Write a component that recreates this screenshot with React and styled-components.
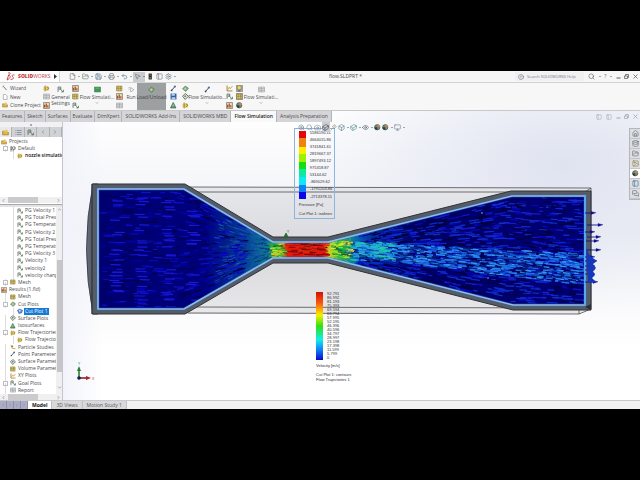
import React from 'react';
import styled, { createGlobalStyle, css } from 'styled-components';
import {
  Box,
  Camera,
  ChevronDown,
  ChevronLeft,
  ChevronRight,
  ChevronUp,
  CircleHelp,
  Cuboid,
  Database,
  Eye,
  File,
  FolderOpen,
  House,
  Image as ImageIcon,
  List as ListIcon,
  MessagesSquare,
  Monitor,
  MousePointer2,
  PanelLeft,
  Printer,
  Save,
  Search,
  Settings,
  Undo2,
  Wand,
  ZoomIn,
} from 'lucide-react';

const GlobalStyle = createGlobalStyle`
  * {
    box-sizing: border-box;
  }

  body {
    margin: 0;
    background: #000;
    color: #4a4a4c;
    font-family: 'Open Sans', 'Noto Sans', sans-serif;
    font-size: 5px;
    line-height: 7px;
  }

  button,
  input {
    margin: 0;
    padding: 0;
    border: 0;
    background: none;
    color: inherit;
    font: inherit;
  }

  svg {
    display: block;
    flex: none;
  }
`;

const Screen = styled.div`
  min-height: 100vh;
  padding: 71px 0;
  display: flex;
  flex-direction: column;
`;

const TitleBar = styled.header`
  height: 12px;
  display: flex;
  align-items: stretch;
  background: #f6f6f6;
  border-bottom: 1px solid #d2d2d2;
`;

const Brand = styled.div`
  width: 60px;
  padding: 0 3px 0 6px;
  display: flex;
  align-items: center;
  gap: 3px;
  background: #fff;
  border-right: 1px solid #d8d8d8;
  color: #c33a3e;
`;

const BrandName = styled.span`
  flex: 1;
  font-family: 'Open Sans', sans-serif;
  font-size: 5px;
  font-weight: 400;

  b {
    font-weight: 800;
  }
`;

const QuickTools = styled.div`
  display: flex;
  align-items: center;
  gap: 1px;
  padding-left: 8px;
`;

const QuickButton = styled.button`
  height: 10px;
  min-width: ${({ $caret }) => ($caret ? '12px' : '8px')};
  display: flex;
  align-items: center;
  justify-content: center;
  gap: 2px;
  color: ${({ $color }) => $color || '#66707c'};
  background: ${({ $active }) => ($active ? '#c9cbce' : 'transparent')};
`;

const Caret = styled.i`
  border: 1px solid transparent;
  border-top-color: #555;
  border-bottom: 0;
`;

const DocumentTitle = styled.h1`
  flex: 1;
  margin: 0;
  align-self: center;
  text-align: center;
  font-size: 5px;
  font-weight: 400;
`;

const SearchBox = styled.label`
  width: 69px;
  margin: 1px 0;
  padding-left: 3px;
  display: flex;
  align-items: center;
  gap: 3px;
  background: #f0f0f2;
  color: #60656c;

  input {
    width: 56px;
    outline: 0;
    font-size: 4px;
  }

  input::placeholder {
    color: #74767c;
    opacity: 1;
  }
`;

const WindowTools = styled.div`
  display: flex;
  align-items: center;
  justify-content: space-between;
  width: 56px;
  padding: 0 2px 0 4px;
`;

const GlyphButton = styled.button`
  display: flex;
  align-items: center;
  justify-content: center;
  color: ${({ $muted }) => ($muted ? '#a2a6b2' : '#5c5c5e')};
`;

const Ribbon = styled.div`
  height: 28px;
  padding-left: 2px;
  display: flex;
  background: #f7f7f7;
  border-bottom: 1px solid #c8c8ca;
`;

const RibbonColumn = styled.div`
  width: ${({ $width }) => $width || 10}px;
  display: flex;
  flex-direction: column;
  justify-content: space-evenly;
  align-items: ${({ $start }) => ($start ? 'flex-start' : 'center')};
`;

const RibbonItem = styled.button`
  display: flex;
  align-items: center;
  gap: 2px;
  line-height: 8px;
  white-space: nowrap;
  background: ${({ $active }) => ($active ? '#9ea1a2' : 'transparent')};
`;

const RibbonButton = styled.button`
  width: ${({ $width }) => $width}px;
  padding-top: 3px;
  display: flex;
  flex-direction: column;
  align-items: center;
  gap: 1px;
  line-height: 6px;
  white-space: nowrap;
  ${({ $active }) =>
    $active &&
    css`
      background: #9da0a1;
      color: #3f4244;
    `}
`;

const Workspace = styled.main`
  flex: 1;
  display: flex;
  flex-direction: column;
  background:
    radial-gradient(ellipse 42% 50% at 88% 18%, #dfe3f0 0%, transparent 100%),
    linear-gradient(90deg, #f3f4fb 10%, transparent 16%),
    linear-gradient(#fff 0%, #f0f1f6 40%, #fff 80%);
`;

const TabRow = styled.div`
  height: 11px;
  display: flex;
  justify-content: space-between;
`;

const Tabs = styled.nav`
  display: flex;
`;

const Tab = styled.button`
  padding: 0 ${({ $pad }) => $pad}px;
  border-right: 1px solid #b5b5b7;
  background: #d5d5d7;
  white-space: nowrap;
  ${({ $active }) =>
    $active &&
    css`
      background: #f9f9f9;
      color: #202020;
      font-weight: 600;
    `}
`;

const ViewControls = styled.div`
  width: 44px;
  padding-right: 2px;
  display: flex;
  align-items: center;
  justify-content: space-between;
`;

const Body = styled.div`
  flex: 1;
  display: flex;
  min-height: 0;
`;

const Sidebar = styled.aside`
  width: 63px;
  display: flex;
  flex-direction: column;
  background: #fff;
  border-right: 1px solid #c4c5ca;
`;

const Grip = styled.div`
  height: 5px;
  display: flex;
  align-items: center;
  justify-content: center;
  background: #f1f1f3;

  &::before {
    content: '';
    width: 2px;
    height: 2px;
    background: #aaa;
  }
`;

const PaneTabs = styled.div`
  height: 10px;
  display: flex;
  background: #d1d2d6;
`;

const PaneTab = styled.button`
  width: 13px;
  display: flex;
  align-items: center;
  justify-content: center;
  border-right: 1px solid #aeb0b4;
  color: #5a6f86;
  background: ${({ $active }) => ($active ? '#e9e9e9' : 'transparent')};
`;

const TreeList = styled.ul`
  margin: 0;
  padding: ${({ $top }) => ($top ? '1px 0 0' : '0')};
  height: ${({ $top }) => ($top ? '60px' : 'auto')};
  flex: ${({ $top }) => ($top ? 'none' : '1')};
  min-width: 0;
  list-style: none;
  display: flex;
  flex-direction: column;
  overflow: hidden;
`;

const TreeRow = styled.li`
  flex: ${({ $fixed }) => ($fixed ? '0 0 7px' : '1 1 0')};
  min-height: 0;
  padding-left: ${({ $level }) => [1, 10, 17][$level]}px;
  position: relative;
  display: flex;
  align-items: center;
  gap: 1px;
  line-height: 7px;
  white-space: nowrap;
  font-weight: ${({ $bold }) => ($bold ? 600 : 400)};
  color: ${({ $bold }) => ($bold ? '#111' : 'inherit')};

  &::before {
    content: '';
    position: absolute;
    left: ${({ $level }) => ($level === 2 ? 13 : 5)}px;
    top: 0;
    bottom: 0;
    border-left: ${({ $level }) => ($level ? '1px solid #dedee2' : '0')};
  }
`;

const TreeLabel = styled.span`
  padding: 0 1px;
  ${({ $selected }) =>
    $selected &&
    css`
      background: #1679d3;
      color: #fff;
    `}
`;

const Expander = styled.button`
  position: absolute;
  left: 3px;
  width: 5px;
  height: 5px;
  border: 1px solid #bbbdc3;
  background: #fff;
  font-size: 4px;
  line-height: 3px;
`;

const TreeArea = styled.div`
  flex: 1;
  min-height: 0;
  display: flex;
`;

const HScroll = styled.div`
  height: 6px;
  display: flex;
  align-items: center;
  justify-content: space-between;
  padding: 0 1px;
  background: #f0f0f0;

  &::before {
    content: '';
    order: 1;
    width: 30px;
    height: 6px;
    margin-right: 17px;
    background: #cbcbcd;
  }

  svg:last-child {
    order: 2;
  }
`;

const VScroll = styled.div`
  width: 6px;
  display: flex;
  flex-direction: column;
  align-items: center;
  background: #f0f0f0;

  &::before {
    content: '';
    order: 1;
    flex: 0 0 60%;
    width: 5px;
    margin: auto 0 13px;
    background: #c6c6c8;
  }

  svg:last-child {
    order: 2;
    margin-bottom: 4px;
  }
`;

const Splitter = styled.div`
  height: 3px;
  margin: 1px 0 0;
  border-top: 1px solid #a7a7a9;
  background: #e3e3e5;
`;

const Viewport = styled.section`
  flex: 1;
  min-width: 0;
  position: relative;
`;

const Scene = styled.svg`
  width: 100%;
  height: 100%;
  position: absolute;
  inset: 0;
`;

const HeadsUp = styled.div`
  position: absolute;
  top: 0;
  left: 0;
  right: 0;
  display: flex;
  justify-content: center;
`;

const Legend = styled.figure`
  position: absolute;
  left: ${({ $left }) => $left}%;
  top: ${({ $top }) => $top}%;
  margin: 0;
  padding: 2px 0 0 4px;
  border: 1px solid ${({ $framed }) => ($framed ? '#8db4dc' : 'transparent')};
  font-family: 'Liberation Sans', Arial, sans-serif;
  font-size: 4px;
  line-height: 5px;
  color: #303034;
  white-space: nowrap;
`;

const Scale = styled.div`
  height: 68px;
  display: flex;
  gap: 4px;
`;

const ScaleBar = styled.div`
  width: 7px;
  background: ${({ $colors }) => $colors};
`;

const ScaleValues = styled.ol`
  margin: 0;
  padding: 0;
  list-style: none;
  display: flex;
  flex-direction: column;
  justify-content: space-between;

  li {
    height: 4px;
    line-height: 4px;
  }
`;

const Caption = styled.figcaption`
  padding: 3px 2px 2px 0;

  p {
    margin: 0;
  }

  p + p {
    margin-top: 4px;
  }

  p + p + p {
    margin-top: 0;
  }
`;

const TaskPane = styled.div`
  position: absolute;
  right: 0;
  top: 6px;
  width: 11px;
  display: flex;
  flex-direction: column;
  border: 1px solid #b4b6bc;
  border-right: 0;
`;

const TaskButton = styled.button`
  height: 10px;
  display: flex;
  align-items: center;
  justify-content: center;
  border-bottom: 1px solid #c3c5ca;
  background: ${({ $active }) => ($active ? '#fff' : '#dcdee2')};
  color: ${({ $color }) => $color || '#5d6874'};
`;

const BottomTabs = styled.nav`
  height: 9px;
  display: flex;
  background: #f2f2f3;
  border-top: 1px solid #c9c9cc;
`;

const PageNav = styled.div`
  width: 28px;
  display: flex;

  button {
    flex: 1;
    display: flex;
    align-items: center;
    justify-content: center;
    border-right: 1px solid #8f91a8;
    background: #abadc4;
    color: #73758f;
  }
`;

const SheetTab = styled.button`
  padding: 0 4px;
  background: ${({ $active }) => ($active ? '#fff' : '#d9d9db')};
  border-right: 1px solid #c0c0c2;
  font-weight: ${({ $active }) => ($active ? 700 : 400)};
  color: ${({ $active }) => ($active ? '#111' : '#555')};
`;

const glyphs = {
  goal: (
    <>
      <path d="M2 11V2h5v4H3" fill="none" stroke="#56605a" strokeWidth="1.5" />
      <path d="M5 4l6 7M8 11h4V7" fill="none" stroke="#4c7a58" strokeWidth="1.5" />
    </>
  ),
  project: (
    <>
      <path d="M1 4h5l1 2h5v5H1z" fill="#d9b24c" stroke="#94762a" />
      <circle cx="8" cy="4" r="3" fill="#e8c860" />
    </>
  ),
  flag: <path d="M2 1v11M2 2h3v5H2M7 2h4v5H7v5" fill="none" stroke="#333" strokeWidth="1.4" />,
  flow: (
    <>
      <path d="M1 3h10v7H1z" fill="#e7c75a" />
      <path d="M4 1v11M7 3l4 3-4 4" fill="none" stroke="#8d7226" strokeWidth="1.5" />
    </>
  ),
  mesh: (
    <>
      <path d="M1 2h10v9H1z" fill="#ecd36a" stroke="#766630" />
      <path d="M4 2v9M8 2v9M1 6h10" stroke="#766630" />
    </>
  ),
  results: (
    <>
      <path d="M1 1h11v11H1z" fill="#eadaae" stroke="#554b3a" />
      <path d="M3 10V5M6 10V3M9 10V6" stroke="#a3392c" strokeWidth="2" />
    </>
  ),
  plot: (
    <>
      <path d="M1 7l5-5 6 4-5 6z" fill="#7eb390" stroke="#36684f" />
      <circle cx="6" cy="7" r="2" fill="#e0cf62" />
    </>
  ),
  cut: (
    <>
      <path d="M1 5l5-3 6 3-2 6-6 1z" fill="#5b8ed8" stroke="#254f9a" />
      <circle cx="6" cy="6" r="2" fill="#cfe2fa" />
    </>
  ),
  surface: (
    <>
      <path d="M1 6l5-5 6 5-6 6z" fill="#f1f1e2" stroke="#45534b" strokeWidth="1.5" />
      <circle cx="6" cy="6" r="2" fill="#62906e" />
    </>
  ),
  iso: (
    <>
      <path d="M6 1l5 10H1z" fill="#8fc5a0" stroke="#2d5940" strokeWidth="1.4" />
      <path d="M3 9h6" stroke="#24483a" />
    </>
  ),
  particle: (
    <>
      <path d="M2 2l3 8h7" fill="none" stroke="#c09d3a" strokeWidth="1.8" />
      <circle cx="5" cy="5" r="2" fill="#a06c34" />
    </>
  ),
  point: (
    <>
      <path d="M2 11L10 2" stroke="#35495d" strokeWidth="1.8" />
      <circle cx="9" cy="3" r="2" fill="#4974a4" />
      <circle cx="3" cy="10" r="1.6" fill="#35495d" />
    </>
  ),
  wizard: (
    <>
      <path d="M2 2l8 9" stroke="#5a6068" strokeWidth="1.8" />
      <path d="M1 4l4-3" stroke="#c9a640" strokeWidth="1.6" />
    </>
  ),
  xy: (
    <>
      <path d="M2 1v10h10" fill="none" stroke="#967532" strokeWidth="1.6" />
      <path d="M3 9l3-5 2 3 4-5" fill="none" stroke="#d09a24" strokeWidth="1.6" />
    </>
  ),
  lights: (
    <>
      <path d="M3 1h6v11H3z" fill="#2b2f33" />
      <circle cx="6" cy="4" r="1.5" fill="#b9463d" />
      <circle cx="6" cy="9" r="1.5" fill="#5aa069" />
    </>
  ),
  bulb: (
    <>
      <circle cx="6" cy="5" r="4" fill="#e9d66b" stroke="#746a38" />
      <path d="M4 10h4v2H4z" fill="#61624f" />
    </>
  ),
  globe: (
    <>
      <circle cx="6" cy="6" r="5" fill="#60946b" stroke="#3a3f43" />
      <path d="M6 1a5 5 0 0 1 5 5H6z" fill="#d87b55" />
      <path d="M6 11a5 5 0 0 1-5-5h5z" fill="#323c48" />
    </>
  ),
  green: (
    <>
      <path d="M1 2h11v9H1z" fill="#3f9b58" stroke="#2c6b40" />
      <path d="M3 4h7" stroke="#8ccc9c" />
    </>
  ),
  play: (
    <>
      <path d="M1 3h3M1 6h2" stroke="#888" />
      <path d="M5 3l6 4-6 4z" fill="#fff" stroke="#77817c" />
    </>
  ),
  disk: (
    <>
      <path d="M1 1h11v11H1z" fill="#315f9f" />
      <path d="M3 1h6v4H3zM3 8h7v4H3z" fill="#b9cfec" />
    </>
  ),
  page: <path d="M3 1h5l3 3v8H3z" fill="#fff" stroke="#85898e" strokeWidth="1.2" />,
  doc: (
    <>
      <path d="M1 2h11v9H1z" fill="#e5e6e8" stroke="#8a8d91" />
      <path d="M1 5h11M1 8h11M6 2v9" stroke="#8a8d91" />
    </>
  ),
};

const Glyph = ({ name, size = 6 }) => (
  <svg width={size} height={size} viewBox="0 0 13 13" aria-hidden="true">
    {glyphs[name]}
  </svg>
);

const quickTools = [
  { label: 'New', icon: File, caret: true },
  { label: 'Open', icon: FolderOpen, caret: true, color: '#5f7d66' },
  { label: 'Save', icon: Save, caret: true, color: '#46617f' },
  { label: 'Print', icon: Printer, caret: true },
  { label: 'Undo', icon: Undo2, caret: true, color: '#476c96' },
  { label: 'Select', icon: MousePointer2, caret: true, active: true },
  { label: 'Rebuild', glyph: 'lights' },
  { label: 'File properties', icon: PanelLeft },
  { label: 'Options', icon: Settings, caret: true },
];

const headsUpTools = [
  { label: 'Zoom to fit', icon: ZoomIn, color: '#6b8294' },
  { label: 'Zoom to area', icon: Search, color: '#6f96ae' },
  { label: 'Previous view', icon: Camera, color: '#77858f' },
  { label: 'Section view', icon: Cuboid, active: true, color: '#3c4a58' },
  { label: 'Annotations', icon: Wand, color: '#87806c' },
  { label: 'View orientation', icon: Box, caret: true, color: '#54788f' },
  { label: 'Display style', icon: Cuboid, caret: true, color: '#4b8795' },
  { label: 'Hide items', icon: Eye, caret: true, color: '#4d5c66' },
  { label: 'Appearance', glyph: 'globe' },
  { label: 'Scene', glyph: 'globe', caret: true },
  { label: 'View settings', icon: Monitor, caret: true, color: '#74798c' },
];

const commandTabs = [
  'Features',
  'Sketch',
  'Surfaces',
  'Evaluate',
  'DimXpert',
  'SOLIDWORKS Add-Ins',
  'SOLIDWORKS MBD',
  'Flow Simulation',
  'Analysis Preparation',
];

const projectTree = [
  { text: 'Projects', level: 0, icon: 'project' },
  { text: 'Default', level: 1, icon: 'flag', sign: '-' },
  { text: 'nozzle simulation', level: 2, icon: 'flow', bold: true },
];

const analysisTree = [
  { text: 'PG Velocity 1', level: 2, icon: 'goal' },
  { text: 'PG Total Pressure', level: 2, icon: 'goal' },
  { text: 'PG Temperature', level: 2, icon: 'goal' },
  { text: 'PG Velocity 2', level: 2, icon: 'goal' },
  { text: 'PG Total Pressure', level: 2, icon: 'goal' },
  { text: 'PG Temperature', level: 2, icon: 'goal' },
  { text: 'PG Velocity 3', level: 2, icon: 'goal' },
  { text: 'Velocity 1', level: 2, icon: 'goal' },
  { text: 'velocity2', level: 2, icon: 'goal' },
  { text: 'velocity change', level: 2, icon: 'goal' },
  { text: 'Mesh', level: 1, icon: 'mesh', sign: '+' },
  { text: 'Results (1.fld)', level: 0, icon: 'results' },
  { text: 'Mesh', level: 1, icon: 'mesh' },
  { text: 'Cut Plots', level: 1, icon: 'plot', sign: '-' },
  { text: 'Cut Plot 1', level: 2, icon: 'cut', selected: true },
  { text: 'Surface Plots', level: 1, icon: 'surface' },
  { text: 'Isosurfaces', level: 1, icon: 'iso' },
  { text: 'Flow Trajectories', level: 1, icon: 'flow', sign: '-' },
  { text: 'Flow Trajectories 1', level: 2, icon: 'flow' },
  { text: 'Particle Studies', level: 1, icon: 'particle' },
  { text: 'Point Parameters', level: 1, icon: 'point' },
  { text: 'Surface Parameters', level: 1, icon: 'surface' },
  { text: 'Volume Parameters', level: 1, icon: 'mesh' },
  { text: 'XY Plots', level: 1, icon: 'xy' },
  { text: 'Goal Plots', level: 1, icon: 'goal', sign: '+' },
  { text: 'Report', level: 1, icon: 'doc' },
];

const pressures = [
  '5586190.11',
  '4664015.86',
  '3741841.61',
  '2819667.37',
  '1897493.12',
  '975318.87',
  '53144.62',
  '-869029.62',
  '-1791203.86',
  '-2713378.11',
];

const velocities = [
  '92.791',
  '86.992',
  '81.193',
  '75.393',
  '69.594',
  '63.794',
  '57.995',
  '52.195',
  '46.396',
  '40.596',
  '34.797',
  '28.997',
  '23.198',
  '17.398',
  '11.599',
  '5.799',
  '0',
];

const pressureColors =
  'linear-gradient(#e00808 0 11%, #f08010 11% 23%, #f8f000 23% 34%, #a0f000 34% 45%, #10e010 45% 56%, #10e8a0 56% 67%, #10e8f8 67% 79%, #1080f8 79% 90%, #0808e8 90%)';
const velocityColors =
  'linear-gradient(#d01008, #f85010 15%, #f8f000 34%, #30e010 50%, #10f0e8 70%, #1080f8 85%, #0808c8)';

// repeatable noise so the trajectories keep their place between renders
const noise = (n) => {
  const v = Math.sin(n * 127.1 + 11.7) * 43758.5453;
  return v - Math.floor(v);
};

const halfHeight = (x) => {
  if (x < 185) return 59;
  if (x < 273) return 59 - ((x - 185) / 88) * 51;
  if (x < 328) return 7;
  if (x < 511) return 7 + ((x - 328) / 183) * 46;
  return 53;
};

const INLET = ['#0000a8', '#0808bc', '#1010cc', '#00004c', '#00005c'];
const NARROWING = ['#1438b4', '#1c54b8', '#062070', '#1c6ca8'];
const OUTLET = ['#0606b8', '#1616d0', '#0a2ad0', '#00003c', '#1030c8', '#000048'];
const JET = ['#1c62e8', '#2a82f0', '#0f48d0', '#1b70e0', '#04186c', '#329cf0', '#06207c'];
const HOT = ['#e41414', '#f02010', '#900808', '#e03010', '#5c0808'];
const GREEN = ['#20c030', '#a0e820', '#0a6028', '#e8e830', '#18a060', '#e8c020'];
const CYAN = ['#20b8d0', '#20d0a0', '#2090e8', '#085080', '#28a8e8'];

const pick = (list, n) => list[Math.floor(noise(n) * list.length)];

const streak = (key, x, y, length, slope, color, width) => (
  <line
    key={key}
    x1={x.toFixed(1)}
    y1={y.toFixed(1)}
    x2={(x + length).toFixed(1)}
    y2={(y + length * slope).toFixed(1)}
    stroke={color}
    strokeWidth={width}
  />
);

const buildStreaks = () => {
  const lines = [];
  for (let i = 0; i < 420; i += 1) {
    const x = 100 + noise(i) * 140;
    const t = noise(i + 500) * 2 - 1;
    const slope = x < 175 ? 0.02 : -t * 0.4;
    lines.push(streak(`in${i}`, x, 249 + t * halfHeight(x), 4 + noise(i + 900) * 7, slope, pick(INLET, i + 3), 1.2));
  }
  for (let i = 0; i < 75; i += 1) {
    const x = [109, 134, 161, 186][i % 4] + noise(i + 640) * 6;
    const t = noise(i + 740) * 2 - 1;
    lines.push(streak(`band${i}`, x, 249 + t * 52, 10, 0.02, '#1818d8', 1.2));
  }
  for (let i = 0; i < 170; i += 1) {
    const x = 212 + noise(i + 1200) * 56;
    const t = noise(i + 1400) * 2 - 1;
    lines.push(streak(`nar${i}`, x, 249 + t * halfHeight(x) * 0.9, 5, -t * 0.5, pick(NARROWING, i), 0.7));
  }
  for (let i = 0; i < 1100; i += 1) {
    const x = 355 + noise(i + 40) * 228;
    const t = noise(i + 2000) * 2 - 1;
    const slope = x > 500 ? 0.06 : t * 0.22;
    lines.push(streak(`out${i}`, x, 250 + t * halfHeight(x), 4 + noise(i + 70) * 8, slope, pick(OUTLET, i + 8), 1.2));
  }
  for (let i = 0; i < 1000; i += 1) {
    const x = 345 + noise(i + 4000) * 236;
    const drift = (x - 345) / 236;
    const y = 249 + drift * 20 + (noise(i + 5100) * 2 - 1) * (7 + drift * 9);
    lines.push(streak(`jet${i}`, x, y, 3 + noise(i + 33) * 6, 0.1, pick(JET, i + 6), 1.3));
  }
  for (let i = 0; i < 130; i += 1) {
    const y = 243 + noise(i + 7300) * 13;
    lines.push(streak(`hot${i}`, 284 + noise(i + 7000) * 40, y, 7, 0, pick(HOT, i), 1));
  }
  for (let i = 0; i < 150; i += 1) {
    const right = i % 3 !== 0;
    const x = right ? 328 + noise(i + 8000) * 22 : 269 + noise(i + 8000) * 14;
    const y = 242 + noise(i + 8300) * 15;
    lines.push(streak(`mid${i}`, x, y, 5, (y - 249) * 0.03, pick(GREEN, i), 1));
  }
  for (let i = 0; i < 130; i += 1) {
    const x = 348 + noise(i + 9000) * 44;
    const y = 242 + noise(i + 9300) * 18;
    lines.push(streak(`cy${i}`, x, y, 6, 0.1, pick(CYAN, i), 1.2));
  }
  return lines;
};

const streaks = buildStreaks();
const exitArrows = [
  [590, 213, 5],
  [592, 225, 10],
  [590, 232, 4],
  [592, 237, 8],
  [591, 241, 7],
  [592, 250, 8],
  [590, 257, 4],
  [590, 261, 6],
  [590, 266, 4],
  [590, 270, 4],
  [590, 274, 4],
  [590, 282, 7],
];

const BODY =
  'M92 184H185L273 237H328L511 191H591V310H513L328 263H273L185 314H92Z';
const CAVITY =
  'M98 189H184L273 242H328L512 196H585V305H513L328 258H273L184 309H98Z';

const NozzleScene = () => (
  <Scene viewBox="63 122 577 278" role="img" aria-label="Nozzle cut plot">
    <defs>
      <linearGradient id="glass" x1="0" y1="0" x2="0" y2="1">
        <stop offset="0" stopColor="#e6e7eb" />
        <stop offset="0.5" stopColor="#d9d9dd" />
        <stop offset="1" stopColor="#e8e8ea" />
      </linearGradient>
      <linearGradient id="flow" gradientUnits="userSpaceOnUse" x1="98" y1="0" x2="585" y2="0">
        <stop offset="0" stopColor="#000070" />
        <stop offset="0.22" stopColor="#00007c" />
        <stop offset="0.3" stopColor="#043c98" />
        <stop offset="0.345" stopColor="#087c8c" />
        <stop offset="0.36" stopColor="#30b040" />
        <stop offset="0.375" stopColor="#c8c020" />
        <stop offset="0.39" stopColor="#d81810" />
        <stop offset="0.46" stopColor="#d01810" />
        <stop offset="0.475" stopColor="#c8d020" />
        <stop offset="0.5" stopColor="#28b050" />
        <stop offset="0.53" stopColor="#086cb0" />
        <stop offset="0.57" stopColor="#02248c" />
        <stop offset="0.65" stopColor="#000068" />
        <stop offset="1" stopColor="#000074" />
      </linearGradient>
      <linearGradient id="face" x1="0" y1="0" x2="1" y2="0">
        <stop offset="0" stopColor="#686e7c" />
        <stop offset="1" stopColor="#434854" />
      </linearGradient>
      <clipPath id="cavity">
        <path d={CAVITY} />
      </clipPath>
    </defs>

    <path d="M185 187L591 188V309L579 314H185Z" fill="url(#glass)" />
    <path
      d="M92 187H190L591 188M196 192H510M585 192L591 188V309L579 314M196 307L579 308L591 303M188 313L579 314V308"
      fill="none"
      stroke="#4b4c50"
      strokeWidth="0.8"
    />

    <path d="M93 184Q80 249 93 314H98V184Z" fill="url(#face)" stroke="#30343c" strokeWidth="0.8" />
    <path d={BODY} fill="#565c66" stroke="#2e3238" strokeWidth="1" />
    <path d="M92 184V314" stroke="#3a3f4c" strokeWidth="1" />
    <path d={CAVITY} fill="url(#flow)" />
    <g clipPath="url(#cavity)">{streaks}</g>
    <path d={CAVITY} fill="none" stroke="#2468c8" strokeWidth="3" strokeOpacity="0.5" />
    <path d={CAVITY} fill="none" stroke="#94bde6" strokeWidth="1.6" />
    <path d="M585 196V305" stroke="#58a8f0" strokeWidth="2" />

    {exitArrows.map(([x, y, length]) => (
      <g key={y} stroke="#10108c" fill="#10108c" strokeWidth="0.9">
        <path d={`M${x - 5} ${y}h${length + 3}`} />
        <path d={`M${x + length - 4} ${y - 1.6}l5 1.4-5 1.6z`} strokeWidth="0.3" />
      </g>
    ))}
    <path d="M586 248l4 8 7 5-4 3 3 4-3 3 2 4-3 3 4 4-8 1z" fill="#1438b8" />
    <path d="M585 307l6-3v6z" fill="#2b2f36" />
    <circle cx="482" cy="213" r="0.8" fill="#a8b4c8" />
    <circle cx="488" cy="278" r="0.8" fill="#a8b4c8" />

    <path d="M286 240v-6M284 237l2-4 2 4z" fill="#246c30" stroke="#246c30" strokeWidth="0.8" />
    <path d="M350 236v18M345 260l6 4" stroke="#3ac89c" strokeWidth="0.6" />
    <text x="287" y="233" fontSize="4" fill="#555">Y</text>

    <path d="M79 378V369" stroke="#2c7a38" strokeWidth="1.6" />
    <path d="M77 371l2-5 2 5z" fill="#2c7a38" />
    <path d="M79 378H88" stroke="#8c2030" strokeWidth="1.6" />
    <path d="M86 376l5 2-5 2z" fill="#a02030" />
    <circle cx="79" cy="378" r="1.8" fill="#15184c" />
    <text x="78" y="365" fontSize="4" fill="#3a9a48">Y</text>
    <text x="92" y="380" fontSize="4" fill="#b83a3a">X</text>
  </Scene>
);

const ToolButton = ({ tool }) => {
  const Icon = tool.icon;
  return (
    <QuickButton
      type="button"
      aria-label={tool.label}
      $caret={tool.caret}
      $active={tool.active}
      $color={tool.color}
    >
      {Icon ? <Icon size={7} /> : <Glyph name={tool.glyph} size={7} />}
      {tool.caret && <Caret />}
    </QuickButton>
  );
};

const WindowButtons = ({ muted }) => (
  <>
    <GlyphButton type="button" aria-label="Minimize" $muted={muted}>
      <svg width="5" height="5" viewBox="0 0 10 10" stroke="currentColor" strokeWidth="2">
        <path d="M1 8h8" />
      </svg>
    </GlyphButton>
    <GlyphButton type="button" aria-label="Restore" $muted={muted}>
      <svg width="5" height="5" viewBox="0 0 10 10" fill="none" stroke="currentColor" strokeWidth="1.5">
        <path d="M1 4h6v5H1zM3 4V1h6v6H7" />
      </svg>
    </GlyphButton>
    <GlyphButton type="button" aria-label="Close" $muted={muted}>
      <svg width="5" height="5" viewBox="0 0 10 10" stroke="currentColor" strokeWidth="1.5">
        <path d="M1 1l8 8M9 1L1 9" />
      </svg>
    </GlyphButton>
  </>
);

const IconColumn = ({ names, width, active = [] }) => (
  <RibbonColumn $width={width}>
    {names.map((name, i) => (
      <RibbonItem type="button" key={i} aria-label={name} $active={active.includes(i)}>
        <Glyph name={name} size={7} />
      </RibbonItem>
    ))}
  </RibbonColumn>
);

const FlowButton = ({ icon, children }) => (
  <RibbonButton type="button" $width={34}>
    <Glyph name={icon} size={7} />
    <span>{children}</span>
    <ChevronDown size={4} />
  </RibbonButton>
);

const Tree = ({ items, top }) => (
  <TreeList $top={top}>
    {items.map((item, i) => (
      <TreeRow key={i} $level={item.level} $bold={item.bold} $fixed={top}>
        {item.sign && <Expander type="button" aria-label={item.text}>{item.sign}</Expander>}
        <Glyph name={item.icon} />
        <TreeLabel $selected={item.selected}>{item.text}</TreeLabel>
      </TreeRow>
    ))}
  </TreeList>
);

const App = () => {
  return (
    <>
      <GlobalStyle />
      <Screen>
        <TitleBar>
          <Brand>
            <svg width="9" height="9" viewBox="0 0 18 18" fill="none" stroke="currentColor" strokeWidth="1.8">
              <path d="M4 2c4-1 6 0 3 3L4 7M4 7c6-1 6 4 0 8L2 16l3-9" />
              <path d="M17 6c-4-1-6 1-4 3s3 4 0 5l-4 1" />
            </svg>
            <BrandName>
              <b>SOLID</b>WORKS
            </BrandName>
            <svg width="4" height="5" viewBox="0 0 4 5" fill="#333">
              <path d="M0 0l3 2.500L0 5z" />
            </svg>
          </Brand>
          <QuickTools>
            {quickTools.map((tool) => (
              <ToolButton key={tool.label} tool={tool} />
            ))}
          </QuickTools>
          <DocumentTitle>flow.SLDPRT *</DocumentTitle>
          <SearchBox>
            <CircleHelp size={6} />
            <input type="text" aria-label="Search help" placeholder="Search SOLIDWORKS Help" />
          </SearchBox>
          <WindowTools>
            <GlyphButton type="button" aria-label="Search">
              <Search size={7} />
            </GlyphButton>
            <Caret />
            <GlyphButton type="button">?</GlyphButton>
            <Caret />
            <WindowButtons />
          </WindowTools>
        </TitleBar>

        <Ribbon>
          <RibbonColumn $width={39} $start>
            <RibbonItem type="button">
              <Glyph name="wizard" />
              Wizard
            </RibbonItem>
            <RibbonItem type="button">
              <Glyph name="page" />
              New
            </RibbonItem>
            <RibbonItem type="button">
              <Glyph name="project" />
              Clone Project
            </RibbonItem>
          </RibbonColumn>
          <IconColumn names={['flow', 'doc', 'results']} />
          <RibbonButton type="button" $width={19}>
            <Glyph name="goal" size={7} />
            <span>
              General
              <br />
              Settings
            </span>
          </RibbonButton>
          <IconColumn names={['results', 'mesh', 'goal']} />
          <FlowButton icon="green">Flow Simulati...</FlowButton>
          <IconColumn names={['mesh', 'results', 'doc']} width={11} />
          <RibbonButton type="button" $width={12}>
            <Glyph name="play" size={7} />
            <span>Run</span>
          </RibbonButton>
          <RibbonButton type="button" $width={29} $active>
            <Glyph name="plot" size={7} />
            <span>Load/Unload</span>
          </RibbonButton>
          <IconColumn names={['point', 'disk', 'iso']} width={14} />
          <IconColumn names={['plot', 'surface', 'flow']} />
          <FlowButton icon="point">Flow Simulatio...</FlowButton>
          <IconColumn names={['xy', 'goal', 'results']} />
          <IconColumn names={['bulb', 'mesh', 'globe']} active={[0, 1]} />
          <FlowButton icon="doc">Flow Simulati...</FlowButton>
        </Ribbon>

        <Workspace>
          <TabRow>
            <Tabs>
              {commandTabs.map((name, i) => (
                <Tab key={name} type="button" $pad={i < 5 ? 2 : 3} $active={name === 'Flow Simulation'}>
                  {name}
                </Tab>
              ))}
            </Tabs>
            <ViewControls>
              <GlyphButton type="button" aria-label="Left pane" $muted>
                <PanelLeft size={6} />
              </GlyphButton>
              <GlyphButton type="button" aria-label="Right pane" $muted>
                <PanelLeft size={6} />
              </GlyphButton>
              <WindowButtons muted />
            </ViewControls>
          </TabRow>

          <Body>
            <Sidebar>
              <Grip />
              <PaneTabs>
                <PaneTab type="button" aria-label="Feature tree" $active>
                  <Glyph name="project" size={7} />
                </PaneTab>
                <PaneTab type="button" aria-label="Properties">
                  <ListIcon size={7} />
                </PaneTab>
                <PaneTab type="button" aria-label="Configurations">
                  <Glyph name="goal" size={7} />
                </PaneTab>
                <PaneTab type="button" aria-label="Previous">
                  <ChevronLeft size={6} />
                </PaneTab>
                <PaneTab type="button" aria-label="Next">
                  <ChevronRight size={6} />
                </PaneTab>
              </PaneTabs>
              <Tree items={projectTree} top />
              <HScroll>
                <ChevronLeft size={5} />
                <ChevronRight size={5} />
              </HScroll>
              <Splitter />
              <TreeArea>
                <Tree items={analysisTree} />
                <VScroll>
                  <ChevronUp size={5} />
                  <ChevronDown size={5} />
                </VScroll>
              </TreeArea>
              <HScroll>
                <ChevronLeft size={5} />
                <ChevronRight size={5} />
              </HScroll>
            </Sidebar>

            <Viewport>
              <NozzleScene />
              <Legend $left={40} $top={2} $framed>
                <Scale>
                  <ScaleBar $colors={pressureColors} />
                  <ScaleValues>
                    {pressures.map((value) => (
                      <li key={value}>{value}</li>
                    ))}
                  </ScaleValues>
                </Scale>
                <Caption>
                  <p>Pressure [Pa]</p>
                  <p>Cut Plot 1: isolines</p>
                </Caption>
              </Legend>
              <Legend $left={43} $top={60}>
                <Scale>
                  <ScaleBar $colors={velocityColors} />
                  <ScaleValues>
                    {velocities.map((value) => (
                      <li key={value}>{value}</li>
                    ))}
                  </ScaleValues>
                </Scale>
                <Caption>
                  <p>Velocity [m/s]</p>
                  <p>Cut Plot 1: contours</p>
                  <p>Flow Trajectories 1</p>
                </Caption>
              </Legend>
              <HeadsUp>
                {headsUpTools.map((tool) => (
                  <ToolButton key={tool.label} tool={tool} />
                ))}
              </HeadsUp>
              <TaskPane>
                <TaskButton type="button" aria-label="Resources">
                  <House size={7} />
                </TaskButton>
                <TaskButton type="button" aria-label="Design library">
                  <Database size={7} />
                </TaskButton>
                <TaskButton type="button" aria-label="File explorer">
                  <FolderOpen size={7} />
                </TaskButton>
                <TaskButton type="button" aria-label="View palette" $color="#8b7a3a">
                  <ImageIcon size={7} />
                </TaskButton>
                <TaskButton type="button" aria-label="Appearances" $active>
                  <Glyph name="globe" size={7} />
                </TaskButton>
                <TaskButton type="button" aria-label="Custom properties" $color="#2f6c8c">
                  <PanelLeft size={7} />
                </TaskButton>
                <TaskButton type="button" aria-label="Forum">
                  <MessagesSquare size={7} />
                </TaskButton>
              </TaskPane>
            </Viewport>
          </Body>

          <BottomTabs>
            <PageNav>
              <button type="button" aria-label="First">
                <ChevronLeft size={4} />
              </button>
              <button type="button" aria-label="Back">
                <ChevronLeft size={4} />
              </button>
              <button type="button" aria-label="Forward">
                <ChevronRight size={4} />
              </button>
              <button type="button" aria-label="Last">
                <ChevronRight size={4} />
              </button>
            </PageNav>
            <SheetTab type="button" $active>
              Model
            </SheetTab>
            <SheetTab type="button">3D Views</SheetTab>
            <SheetTab type="button">Motion Study 1</SheetTab>
          </BottomTabs>
        </Workspace>
      </Screen>
    </>
  );
};

export default App;
